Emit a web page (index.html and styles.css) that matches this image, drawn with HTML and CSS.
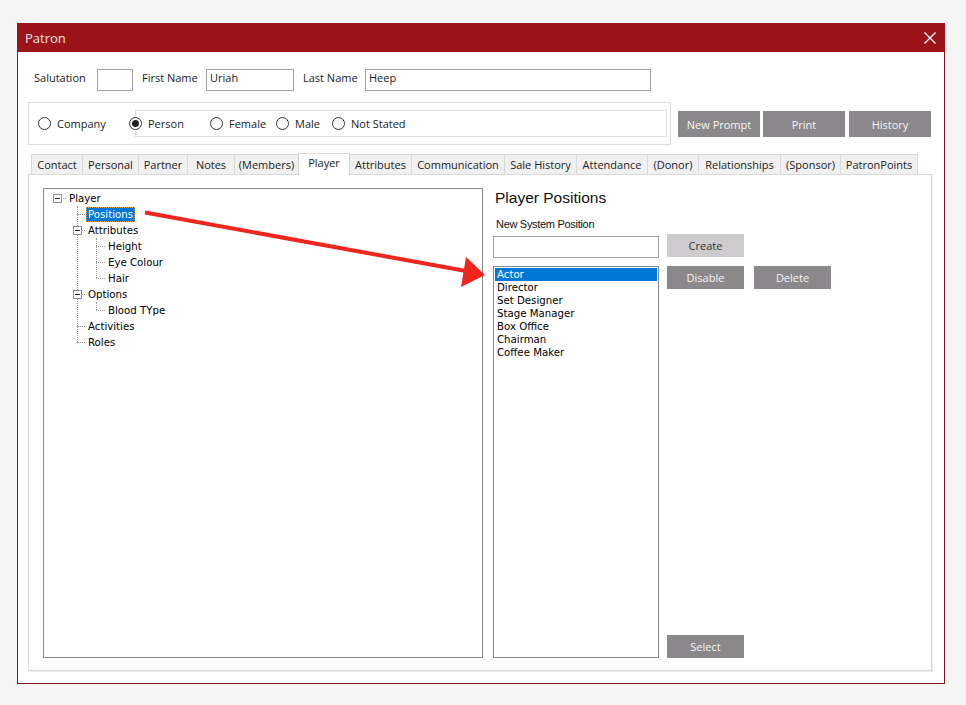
FILE: index.html
```html
<!DOCTYPE html>
<html>
<head>
<meta charset="utf-8">
<title>Patron</title>
<link rel="stylesheet" href="styles.css">
</head>
<body>
<div class="window">
  <div class="titlebar">
    <span class="title">Patron</span>
    <svg class="close" width="12" height="12" viewBox="0 0 12 12"><path d="M0.5 0.5 L11.5 11.5 M11.5 0.5 L0.5 11.5" stroke="#ffffff" stroke-width="1.3" fill="none"/></svg>
  </div>
  <div class="content">
    <div class="row-names">
      <span class="lbl lbl-sal">Salutation</span><div class="input in-sal"></div>
      <span class="lbl lbl-first">First Name</span><div class="input in-first">Uriah</div>
      <span class="lbl lbl-last">Last Name</span><div class="input in-last">Heep</div>
    </div>
    <div class="row-type">
      <div class="group">
        <div class="radio r-company"><span class="circle"></span><span>Company</span></div>
        <div class="subgroup">
          <div class="radio r-person"><span class="circle"><span class="dot"></span></span><span>Person</span></div>
          <div class="radio r-female"><span class="circle"></span><span>Female</span></div>
          <div class="radio r-male"><span class="circle"></span><span>Male</span></div>
          <div class="radio"><span class="circle"></span><span>Not Stated</span></div>
        </div>
      </div>
      <div class="btn btn-top b-prompt">New Prompt</div>
      <div class="btn btn-top b-print">Print</div>
      <div class="btn btn-top b-history">History</div>
    </div>
    <div class="tabs">
      <div class="tab t1">Contact</div>
      <div class="tab t2">Personal</div>
      <div class="tab t3">Partner</div>
      <div class="tab t4">Notes</div>
      <div class="tab t5">(Members)</div>
      <div class="tab t6 active">Player</div>
      <div class="tab t7">Attributes</div>
      <div class="tab t8">Communication</div>
      <div class="tab t9">Sale History</div>
      <div class="tab t10">Attendance</div>
      <div class="tab t11">(Donor)</div>
      <div class="tab t12">Relationships</div>
      <div class="tab t13">(Sponsor)</div>
      <div class="tab t14 last">PatronPoints</div>
    </div>
    <div class="panel">
      <div class="tree">
        <div class="node l0"><span class="exp"></span><span class="txt">Player</span></div>
        <div class="kids k1">
          <div class="node l1"><span class="txt sel">Positions</span></div>
          <div class="node l1"><span class="exp"></span><span class="txt">Attributes</span></div>
          <div class="kids k2">
            <div class="node l2"><span class="txt">Height</span></div>
            <div class="node l2"><span class="txt">Eye Colour</span></div>
            <div class="node l2"><span class="txt">Hair</span></div>
          </div>
          <div class="node l1"><span class="exp"></span><span class="txt">Options</span></div>
          <div class="kids k2">
            <div class="node l2"><span class="txt">Blood TYpe</span></div>
          </div>
          <div class="node l1"><span class="txt">Activities</span></div>
          <div class="node l1"><span class="txt">Roles</span></div>
        </div>
      </div>
      <div class="positions">
        <div class="heading">Player Positions</div>
        <div class="sublabel">New System Position</div>
        <div class="row-input">
          <div class="input in-pos"></div>
          <div class="btn btn-light">Create</div>
        </div>
        <div class="row-list">
          <div class="list">
            <div class="item selected">Actor</div>
            <div class="item">Director</div>
            <div class="item">Set Designer</div>
            <div class="item">Stage Manager</div>
            <div class="item">Box Office</div>
            <div class="item">Chairman</div>
            <div class="item">Coffee Maker</div>
          </div>
          <div class="btncol">
            <div class="btnrow">
              <div class="btn btn-small">Disable</div>
              <div class="btn btn-small">Delete</div>
            </div>
            <div class="btn btn-small">Select</div>
          </div>
        </div>
      </div>
    </div>
  </div>
</div>
<svg class="arrow" width="966" height="705" viewBox="0 0 966 705">
  <line x1="145" y1="212.5" x2="466" y2="271" stroke="#f0261c" stroke-width="4" stroke-linecap="butt"/>
  <polygon points="485,275 461,287 466,257" fill="#f0261c"/>
</svg>
</body>
</html>
```

FILE: styles.css
```css
html, body {
  margin: 0;
  padding: 0;
}
body {
  width: 966px;
  height: 705px;
  box-sizing: border-box;
  padding: 23px 0 0 17px;
  background: #f5f5f5;
  position: relative;
  overflow: hidden;
  font-family: "Open Sans", "Noto Sans", sans-serif;
  color: #1a1a1a;
}
.window {
  width: 928px;
  height: 661px;
  box-sizing: border-box;
  border: 1px solid #7e1a1e;
  border-top: 0;
  background: #ffffff;
  display: flex;
  flex-direction: column;
}
.titlebar {
  flex: none;
  height: 29px;
  margin: 0 -1px;
  background: #9c1419;
  display: flex;
  align-items: center;
  justify-content: space-between;
  padding: 0 9px 0 8px;
}
.title {
  color: #f3e4e4;
  font-size: 13px;
}
.close {
  display: block;
}
.content {
  flex: 1;
  display: flex;
  flex-direction: column;
  padding: 17px 12px 12px 10px;
  min-height: 0;
}
.row-names {
  display: flex;
  align-items: flex-start;
  height: 22px;
  padding-left: 6px;
}
.lbl {
  font-size: 11px;
  line-height: 17px;
  flex: none;
}
.lbl-sal { width: 63px; }
.lbl-first { width: 64px; margin-left: 9px; }
.lbl-last { width: 62px; margin-left: 9px; }
.input {
  height: 22px;
  box-sizing: border-box;
  border: 1px solid #a2a2a2;
  background: #fff;
  font-size: 11px;
  line-height: 16px;
  padding-left: 3px;
  flex: none;
}
.in-sal { width: 36px; }
.in-first { width: 88px; }
.in-last { width: 286px; }

.row-type {
  display: flex;
  align-items: flex-start;
  margin-top: 11px;
}
.group {
  width: 643px;
  height: 43px;
  box-sizing: border-box;
  border: 1px solid #dcdcdc;
  display: flex;
  align-items: center;
  padding-left: 9px;
  flex: none;
}
.radio {
  display: flex;
  align-items: center;
  font-size: 11px;
  flex: none;
}
.circle {
  width: 13px;
  height: 13px;
  box-sizing: border-box;
  border: 1px solid #333;
  border-radius: 50%;
  background: #fff;
  display: flex;
  align-items: center;
  justify-content: center;
  margin-right: 6px;
  flex: none;
}
.dot {
  width: 7px;
  height: 7px;
  border-radius: 50%;
  background: #222;
}
.r-company { width: 97px; }
.subgroup {
  width: 532px;
  height: 27px;
  box-sizing: border-box;
  border: 1px solid #dcdcdc;
  display: flex;
  align-items: center;
  flex: none;
}
.r-person { width: 81px; margin-left: -7px; }
.r-female { width: 66px; }
.r-male { width: 56px; }

.btn {
  display: flex;
  align-items: center;
  justify-content: center;
  font-size: 11px;
  background: #8a888b;
  color: #f6f6f6;
  flex: none;
  box-sizing: border-box;
}
.btn-top {
  width: 82px;
  height: 26px;
  margin-top: 9px;
}
.b-prompt { margin-left: 7px; }
.b-print { margin-left: 3px; }
.b-history { margin-left: 4px; }

.tabs {
  display: flex;
  align-items: flex-start;
  height: 21px;
  margin-top: 9px;
  margin-bottom: -1px;
  padding-left: 3px;
  position: relative;
  z-index: 1;
}
.tab {
  height: 20px;
  box-sizing: border-box;
  border: 1px solid #d9d9d9;
  border-bottom: 0;
  border-right: 0;
  background: #f0f0f0;
  font-size: 11px;
  line-height: 18px;
  padding-top: 1px;
  text-align: center;
  color: #222;
  flex: none;
  white-space: nowrap;
}
.tab.last { border-right: 1px solid #d9d9d9; }
.tab.active {
  height: 22px;
  margin-top: -1px;
  background: #fff;
  border-right: 1px solid #d9d9d9;
  padding-top: 0;
}
.tab.active + .tab { border-left: 0; }
.t1 { width: 51px; }
.t2 { width: 56px; }
.t3 { width: 49px; }
.t4 { width: 47px; }
.t5 { width: 64px; }
.t6 { width: 52px; }
.t7 { width: 61px; }
.t8 { width: 93px; }
.t9 { width: 72px; }
.t10 { width: 71px; }
.t11 { width: 51px; }
.t12 { width: 82px; }
.t13 { width: 60px; }
.t14 { width: 78px; }

.panel {
  flex: 1;
  min-height: 0;
  border: 1px solid #d9d9d9;
  box-shadow: 1px 1px 0 #ececec;
  display: flex;
  padding: 13px 14px 12px 14px;
}
.tree {
  width: 440px;
  flex: none;
  box-sizing: border-box;
  border: 1px solid #858a90;
  padding-top: 1px;
  font-family: "DejaVu Sans", sans-serif;
  font-size: 10.2px;
  color: #000;
}
.node {
  position: relative;
  height: 16px;
  display: flex;
  align-items: center;
  box-sizing: border-box;
}
.node::before {
  content: "";
  position: absolute;
  top: 8px;
  border-top: 1px dotted #9a9a9a;
}
.l0 { padding-left: 23px; }
.l0::before { left: 13px; width: 9px; }
.l1 { padding-left: 42px; }
.l1::before { left: 33px; width: 8px; }
.l2 { padding-left: 62px; }
.l2::before { left: 52px; width: 9px; }
.exp {
  position: absolute;
  top: 4px;
  width: 9px;
  height: 9px;
  box-sizing: border-box;
  border: 1px solid #919191;
  background: #fff;
  z-index: 1;
}
.exp::after {
  content: "";
  position: absolute;
  left: 1px;
  top: 3px;
  width: 5px;
  height: 1px;
  background: #222;
}
.l0 .exp { left: 9px; }
.l1 .exp { left: 29px; }
.txt {
  display: inline-block;
  line-height: 13px;
  padding: 0 1px;
  border: 1px solid transparent;
  white-space: nowrap;
}
.txt.sel {
  background: #0078d7;
  color: #fff;
  border: 1px dotted #e0a040;
}
.kids {
  position: relative;
}
.kids::before {
  content: "";
  position: absolute;
  top: 0;
  bottom: 8px;
  border-left: 1px dotted #9a9a9a;
}
.k1::before { left: 33px; }
.k2::before { left: 52px; }

.positions {
  flex: 1;
  margin-left: 10px;
  display: flex;
  flex-direction: column;
  min-height: 0;
}
.heading {
  font-family: "Liberation Sans", Arial, sans-serif;
  font-size: 15.5px;
  line-height: 18px;
  margin-top: 1px;
  padding-left: 2px;
  color: #111;
}
.sublabel {
  font-family: "Liberation Sans", Arial, sans-serif;
  font-size: 11px;
  letter-spacing: -0.3px;
  line-height: 13px;
  margin-top: 11px;
  padding-left: 3px;
  color: #111;
}
.row-input {
  display: flex;
  align-items: flex-start;
  margin-top: 5px;
}
.in-pos {
  width: 166px;
  border-color: #a0a0a0;
}
.btn-light {
  width: 77px;
  height: 23px;
  margin-left: 8px;
  margin-top: -2px;
  background: #cdcbce;
  color: #333;
}
.row-list {
  flex: 1;
  display: flex;
  margin-top: 8px;
  min-height: 0;
}
.list {
  width: 166px;
  flex: none;
  box-sizing: border-box;
  border: 1px solid #858a90;
  padding: 1px;
  font-family: "DejaVu Sans", sans-serif;
  font-size: 10.2px;
  color: #000;
}
.item {
  height: 13px;
  box-sizing: border-box;
  padding-top: 1px;
  line-height: 12px;
  padding-left: 2px;
  white-space: nowrap;
}
.item.selected {
  background: #0078d7;
  color: #fff;
}
.btncol {
  margin-left: 8px;
  display: flex;
  flex-direction: column;
  justify-content: space-between;
  align-items: flex-start;
}
.btnrow {
  display: flex;
  gap: 10px;
}
.btn-small {
  width: 77px;
  height: 23px;
}
.arrow {
  position: absolute;
  left: 0;
  top: 0;
  pointer-events: none;
}
```
